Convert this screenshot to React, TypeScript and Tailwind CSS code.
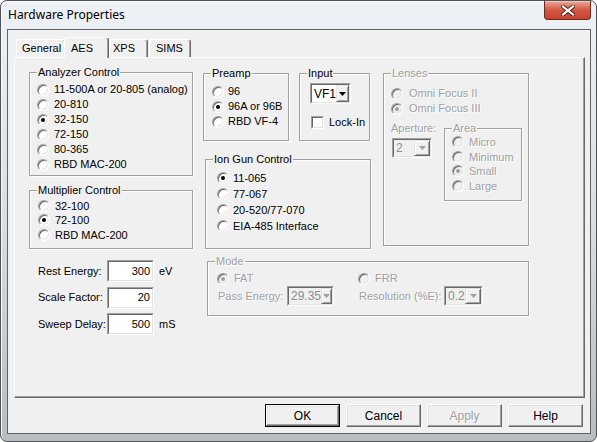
import type { ReactNode } from "react";

const dis = "text-[#a0a0a0] [text-shadow:1px_1px_0_#fff]";

function Radio({ checked, disabled }: { checked?: boolean; disabled?: boolean }) {
  return (
    <span
      className={`relative inline-block w-[12px] h-[12px] shrink-0 rounded-full border border-t-[#a0a0a0] border-l-[#a0a0a0] border-r-white border-b-white shadow-[inset_1px_1px_0_#696969,inset_-1px_-1px_0_#e3e3e3] ${
        disabled ? "bg-[#f0f0f0]" : "bg-white"
      }`}
    >
      {checked && (
        <span
          className={`absolute left-[3px] top-[3px] w-[4px] h-[4px] rounded-full ${
            disabled ? "bg-[#a0a0a0]" : "bg-black"
          }`}
        />
      )}
    </span>
  );
}

function RadioRow({
  label,
  checked,
  disabled,
  gap = "gap-[5px]",
  h = "h-[15px]",
}: {
  label: string;
  checked?: boolean;
  disabled?: boolean;
  gap?: string;
  h?: string;
}) {
  return (
    <div className={`flex items-center ${gap} ${h}`}>
      <Radio checked={checked} disabled={disabled} />
      <span className={`whitespace-nowrap ${disabled ? dis : ""}`}>{label}</span>
    </div>
  );
}

function Group({
  label,
  className,
  disabled,
  children,
}: {
  label: string;
  className?: string;
  disabled?: boolean;
  children?: ReactNode;
}) {
  return (
    <div
      className={`relative shrink-0 border border-[#a0a0a0] shadow-[1px_1px_0_#fff,inset_1px_1px_0_#fff] ${className ?? ""}`}
    >
      <span
        className={`absolute -top-[8px] left-[7px] px-[1px] bg-[#f0f0f0] leading-[14px] whitespace-nowrap ${
          disabled ? dis : "text-black"
        }`}
      >
        {label}
      </span>
      {children}
    </div>
  );
}

function Sunken({
  className,
  disabled,
  children,
}: {
  className?: string;
  disabled?: boolean;
  children?: ReactNode;
}) {
  return (
    <div
      className={`shrink-0 border border-t-[#a0a0a0] border-l-[#a0a0a0] border-r-white border-b-white ${className ?? ""}`}
    >
      <div
        className={`h-full border border-t-[#696969] border-l-[#696969] border-r-[#e3e3e3] border-b-[#e3e3e3] ${
          disabled ? "bg-[#f0f0f0]" : "bg-white"
        }`}
      >
        {children}
      </div>
    </div>
  );
}

function Arrow({ disabled }: { disabled?: boolean }) {
  return (
    <svg width="7" height="4" viewBox="0 0 7 4">
      <path d="M0 0h7L3.5 4z" fill={disabled ? "#a0a0a0" : "#000"} />
    </svg>
  );
}

function Combo({ value, className, disabled }: { value: string; className: string; disabled?: boolean }) {
  return (
    <Sunken className={className} disabled={disabled}>
      <div className="flex h-full">
        <span className={`flex-1 pl-[2px] flex items-center ${disabled ? "text-[#8d8d8d]" : ""}`}>{value}</span>
        <div className="w-[16px] h-full flex items-center justify-center bg-[#f0f0f0] border border-t-[#e3e3e3] border-l-[#e3e3e3] border-r-[#696969] border-b-[#696969] shadow-[inset_1px_1px_0_#fff,inset_-1px_-1px_0_#a0a0a0]">
          <Arrow disabled={disabled} />
        </div>
      </div>
    </Sunken>
  );
}

function Field({ label, value, unit }: { label: string; value: string; unit?: string }) {
  return (
    <div className="flex items-center h-[22px]">
      <span className="w-[78px] pl-[9px] whitespace-nowrap">{label}</span>
      <Sunken className="w-[47px] h-[22px]">
        <div className="h-full flex items-center justify-end pr-[2px]">{value}</div>
      </Sunken>
      {unit && <span className="ml-[5px]">{unit}</span>}
    </div>
  );
}

function Button({ label, primary, disabled }: { label: string; primary?: boolean; disabled?: boolean }) {
  return (
    <div className={`w-[75px] h-[23px] ${primary ? "border border-black" : ""}`}>
      <div className="h-full flex items-center justify-center bg-[#f0f0f0] border border-t-white border-l-white border-r-[#696969] border-b-[#696969] shadow-[inset_-1px_-1px_0_#a0a0a0,inset_1px_1px_0_#e3e3e3]">
        <span className={`text-[12px] ${disabled ? dis : ""}`}>{label}</span>
      </div>
    </div>
  );
}

function Tab({ label, selected, className }: { label: string; selected?: boolean; className: string }) {
  return (
    <div
      className={`relative shrink-0 flex items-center bg-[#f0f0f0] rounded-t-[3px] border-t border-l border-r border-t-white border-l-white border-r-[#696969] shadow-[inset_-1px_0_0_#a0a0a0] ${
        selected ? "h-[21px] -mb-px z-10" : "h-[18px]"
      } ${className}`}
    >
      {label}
    </div>
  );
}

export default function App() {
  return (
    <div className="w-[597px] h-[442px] font-['Liberation_Sans',Arial,sans-serif] text-[11px] text-black">
      <div className="w-full h-full rounded-[7px] border border-[#4f5256] bg-gradient-to-b from-[#eef1f5] via-[#dadee3] to-[#b8bbbf] shadow-[inset_1px_1px_0_#f8f9fa]">
        {/* title bar */}
        <div className="flex items-start justify-between h-[28px]">
          <span className="ml-[7px] mt-[6px] font-['Noto_Sans',sans-serif] text-[12px] leading-[16px] text-black">
            Hardware Properties
          </span>
          <div className="mr-[5px] w-[47px] h-[19px] rounded-b-[4px] border border-t-0 border-[#6a2a1e] bg-gradient-to-b from-[#e8a999] via-[#d35844] to-[#c8422c] shadow-[inset_0_1px_0_#f3c9bd] flex items-center justify-center">
            <svg width="14" height="11" viewBox="0 0 14 11">
              <path d="M2 1.5l10 8M12 1.5l-10 8" stroke="#4a1a12" strokeWidth="4" strokeLinecap="square" />
              <path d="M2 1.5l10 8M12 1.5l-10 8" stroke="#fff" strokeWidth="2.2" strokeLinecap="square" />
            </svg>
          </div>
        </div>

        {/* client area */}
        <div className="ml-[6px] w-[584px] h-[405px] border border-[#5f6266] bg-[#f0f0f0]">
          <div className="pl-[6px] pt-[7px]">
            {/* tabs */}
            <div className="flex items-end h-[20px]">
              <Tab label="General" className="ml-[2px] w-[50px] pl-[5px]" />
              <Tab label="AES" selected className="-ml-[2px] w-[45px] pl-[6px]" />
              <Tab label="XPS" className="w-[39px] pl-[3px]" />
              <Tab label="SIMS" className="ml-[1px] w-[42px] pl-[6px]" />
            </div>

            {/* panel */}
            <div className="w-[571px] h-[341px] border border-t-white border-l-white border-r-[#696969] border-b-[#696969] shadow-[inset_-1px_-1px_0_#a0a0a0]">
              <div className="flex pl-[14px] pt-[14px]">
                {/* left column */}
                <div className="w-[164px] shrink-0">
                  <Group label="Analyzer Control" className="h-[104px]">
                    <div className="pl-[7px] pt-[9px]">
                      <RadioRow label="11-500A or 20-805 (analog)" />
                      <RadioRow label="20-810" />
                      <RadioRow label="32-150" checked />
                      <RadioRow label="72-150" />
                      <RadioRow label="80-365" />
                      <RadioRow label="RBD MAC-200" />
                    </div>
                  </Group>
                  <Group label="Multiplier Control" className="mt-[14px] h-[59px]">
                    <div className="pl-[8px] pt-[7.5px]">
                      <RadioRow label="32-100" h="h-[14.5px]" />
                      <RadioRow label="72-100" checked h="h-[14.5px]" />
                      <RadioRow label="RBD MAC-200" h="h-[14.5px]" />
                    </div>
                  </Group>
                  <div className="mt-[11px] flex flex-col gap-[4.5px]">
                    <Field label="Rest Energy:" value="300" unit="eV" />
                    <Field label="Scale Factor:" value="20" />
                    <Field label="Sweep Delay:" value="500" unit="mS" />
                  </div>
                </div>

                {/* right section */}
                <div className="ml-[10px]">
                  <div className="flex mt-[1px]">
                    <div className="w-[168px] shrink-0">
                      <div className="flex">
                        <Group label="Preamp" className="w-[86px] h-[68px]">
                          <div className="pl-[8px] pt-[10px]">
                            <RadioRow label="96" gap="gap-[4px]" />
                            <RadioRow label="96A or 96B" checked gap="gap-[4px]" />
                            <RadioRow label="RBD VF-4" gap="gap-[4px]" />
                          </div>
                        </Group>
                        <Group label="Input" className="ml-[10px] w-[71px] h-[68px]">
                          <div className="pl-[10px] pt-[9px]">
                            <Combo value="VF1" className="w-[41px] h-[21px] text-[12px]" />
                            <div className="mt-[10px] ml-[1px] flex items-center gap-[5px]">
                              <Sunken className="w-[13px] h-[13px]" />
                              <span>Lock-In</span>
                            </div>
                          </div>
                        </Group>
                      </div>
                      <Group label="Ion Gun Control" className="ml-[2px] mt-[18px] w-[166px] h-[90px]">
                        <div className="pl-[11px] pt-[10px]">
                          <RadioRow label="11-065" checked gap="gap-[4px]" h="h-[16px]" />
                          <RadioRow label="77-067" gap="gap-[4px]" h="h-[16px]" />
                          <RadioRow label="20-520/77-070" gap="gap-[4px]" h="h-[16px]" />
                          <RadioRow label="EIA-485 Interface" gap="gap-[4px]" h="h-[16px]" />
                        </div>
                      </Group>
                    </div>

                    <Group label="Lenses" disabled className="ml-[12px] w-[146px] h-[173px]">
                      <div className="pl-[7px] pt-[12px]">
                        <RadioRow label="Omni Focus II" disabled gap="gap-[6px]" />
                        <RadioRow label="Omni Focus III" checked disabled gap="gap-[6px]" />
                        <div className="flex mt-[5px]">
                          <div className="w-[53px] shrink-0">
                            <div className={`leading-[14px] ${dis}`}>Aperture:</div>
                            <Combo value="2" disabled className="mt-[3px] ml-[1px] w-[40px] h-[20px] text-[12px]" />
                          </div>
                          <Group label="Area" disabled className="mt-[7px] w-[78px] h-[73px]">
                            <div className="pl-[7px] pt-[6px]">
                              <RadioRow label="Micro" disabled h="h-[14.5px]" />
                              <RadioRow label="Minimum" disabled h="h-[14.5px]" />
                              <RadioRow label="Small" checked disabled h="h-[14.5px]" />
                              <RadioRow label="Large" disabled h="h-[14.5px]" />
                            </div>
                          </Group>
                        </div>
                      </div>
                    </Group>
                  </div>

                  <Group label="Mode" disabled className="ml-[4px] mt-[12px] w-[322px] h-[55px]">
                    <div className="flex pl-[9px] pt-[9px]">
                      <div className="w-[141px] shrink-0">
                        <RadioRow label="FAT" checked disabled />
                        <div className="flex items-center">
                          <span className={`w-[70px] pl-[1px] ${dis}`}>Pass Energy:</span>
                          <Combo value="29.35" disabled className="w-[47px] h-[20px] text-[12px]" />
                        </div>
                      </div>
                      <div>
                        <RadioRow label="FRR" disabled />
                        <div className="flex items-center">
                          <span className={`w-[86px] pl-[1px] whitespace-nowrap ${dis}`}>Resolution (%E):</span>
                          <Combo value="0.2" disabled className="w-[39px] h-[20px] text-[12px]" />
                        </div>
                      </div>
                    </div>
                  </Group>
                </div>
              </div>
            </div>

            {/* buttons */}
            <div className="w-[571px] mt-[6px] pr-[2px] flex justify-end gap-[6px]">
              <Button label="OK" primary />
              <Button label="Cancel" />
              <Button label="Apply" disabled />
              <Button label="Help" />
            </div>
          </div>
        </div>
      </div>
    </div>
  );
}
